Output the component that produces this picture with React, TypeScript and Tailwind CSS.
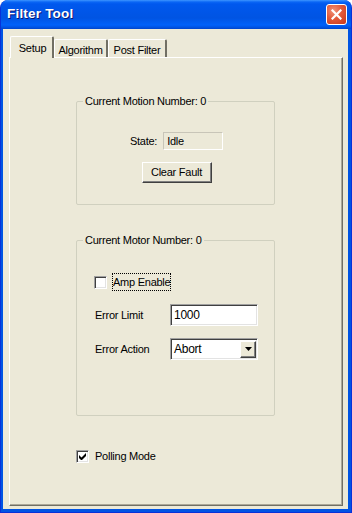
const sunken =
  'border border-t-[#A0A0A0] border-l-[#A0A0A0] border-b-white border-r-white shadow-[inset_1px_1px_0_#404040,inset_-1px_-1px_0_#E3E3E3]'
const raised =
  'border border-t-white border-l-white border-b-[#404040] border-r-[#404040] shadow-[inset_-1px_-1px_0_#808080]'

function Checkbox({ checked }: { checked?: boolean }) {
  return (
    <div className={`w-[13px] h-[13px] bg-white flex items-center justify-center ${sunken}`}>
      {checked && (
        <svg width="7" height="7" viewBox="0 0 7 7">
          <path d="M0 2v3l2 2h1l4-4V0L2.5 4.5z" fill="#000" />
        </svg>
      )}
    </div>
  )
}

function GroupBox({ title, className, children }: { title: string; className: string; children: React.ReactNode }) {
  return (
    <div className={`relative w-[199px] border border-[#D0D0BF] rounded-[2px] ${className}`}>
      <span className="absolute -top-[7px] left-[6px] bg-[#ECE9D8] px-[2px] leading-[13px]">{title}</span>
      {children}
    </div>
  )
}

export default function App() {
  return (
    <div className="w-[352px] h-[513px] bg-white font-['Liberation_Sans',Arial,sans-serif] text-[11px] tracking-[-0.25px] text-black">
      <div className="flex h-full flex-col rounded-t-[8px] bg-[#0054E3] border-x border-b border-[#0831D9]">
        {/* title bar */}
        <div className="h-[29px] shrink-0 flex items-center justify-between pl-[6px] pr-[4px] rounded-t-[7px] bg-[linear-gradient(to_bottom,#3D95FF_0px,#0A66F5_2px,#0058EE_4px,#0054E3_18px,#0061FA_25px,#0055E6_27px,#0044CC_29px)]">
          <span className="font-bold text-[13.5px] text-white [text-shadow:1px_1px_0_#0A1874] tracking-[0.2px]">Filter Tool</span>
          <div className="w-[21px] h-[21px] rounded-[3px] border border-white flex items-center justify-center bg-[radial-gradient(circle_at_35%_30%,#F0937A_0%,#E35A3A_45%,#C7371A_100%)]">
            <svg width="11" height="11" viewBox="0 0 11 11">
              <path d="M1.5 1.5l8 8M9.5 1.5l-8 8" stroke="#fff" strokeWidth="2.2" strokeLinecap="square" />
            </svg>
          </div>
        </div>

        {/* frame */}
        <div className="flex-1 flex flex-col pl-[2px] pr-[3px] pb-[3px]">
          {/* client */}
          <div className="flex-1 flex flex-col bg-[#ECE9D8] pl-[6px] pr-[5px] pt-[7px] pb-[3px]">
            <div className="h-[21px] flex items-end shrink-0">
              <div className="relative z-10 ml-[1px] -mb-px w-[44px] h-[22px] bg-[#ECE9D8] border-l border-t border-white border-r-2 border-r-[#716F64] rounded-t-[2px] flex items-start justify-center pt-[3px] pl-[2px]">
                Setup
              </div>
              <div className="w-[54px] h-[18px] border-l border-t border-white border-r-2 border-r-[#716F64] rounded-t-[2px] flex items-start justify-center pt-[2px]">
                Algorithm
              </div>
              <div className="w-[59px] h-[18px] border-l border-t border-white border-r-2 border-r-[#716F64] rounded-t-[2px] flex items-start justify-center pt-[2px]">
                Post Filter
              </div>
            </div>

            <div className="flex-1 border-l border-t border-white border-r border-b border-r-[#716F64] border-b-[#716F64] shadow-[inset_-1px_-1px_0_#ACA899] pl-[66px] pt-[43px]">
              <GroupBox title="Current Motion Number: 0" className="h-[104px]">
                <div className="flex flex-col items-center pt-[30px] pl-[2px]">
                  <div className="flex items-center h-[18px]">
                    <span>State:</span>
                    <div className="ml-[6px] w-[60px] h-[18px] border border-t-[#C8C5B8] border-l-[#C8C5B8] border-b-white border-r-white flex items-center pl-[3px]">
                      Idle
                    </div>
                  </div>
                  <div className={`mt-[12px] w-[70px] h-[21px] flex items-center justify-center bg-[#ECE9D8] ${raised}`}>
                    Clear Fault
                  </div>
                </div>
              </GroupBox>

              <GroupBox title="Current Motor Number: 0" className="mt-[35px] h-[176px]">
                <div className="flex flex-col pl-[17px] pt-[32px]">
                  <div className="flex items-center h-[18px]">
                    <Checkbox />
                    <span className="ml-[5px] h-[18px] px-[1px] flex items-center outline-1 outline-dotted outline-black -outline-offset-1">
                      Amp Enable
                    </span>
                  </div>
                  <div className="flex items-center h-[22px] mt-[13px]">
                    <span className="w-[76px] pl-[1px]">Error Limit</span>
                    <div className={`w-[88px] h-[22px] bg-white flex items-center pl-[3px] text-[12px] ${sunken}`}>1000</div>
                  </div>
                  <div className="flex items-center h-[22px] mt-[12px]">
                    <span className="w-[76px] pl-[1px]">Error Action</span>
                    <div className={`w-[88px] h-[22px] bg-white flex items-center justify-between pl-[3px] pr-[1px] text-[12px] ${sunken}`}>
                      <span>Abort</span>
                      <div className={`w-[16px] h-[17px] bg-[#ECE9D8] flex items-center justify-center ${raised}`}>
                        <svg width="7" height="4" viewBox="0 0 7 4">
                          <path d="M0 0h7L3.5 4z" fill="#000" />
                        </svg>
                      </div>
                    </div>
                  </div>
                </div>
              </GroupBox>

              <div className="mt-[34px] flex items-center h-[13px]">
                <Checkbox checked />
                <span className="ml-[6px]">Polling Mode</span>
              </div>
            </div>
          </div>
        </div>
      </div>
    </div>
  )
}
